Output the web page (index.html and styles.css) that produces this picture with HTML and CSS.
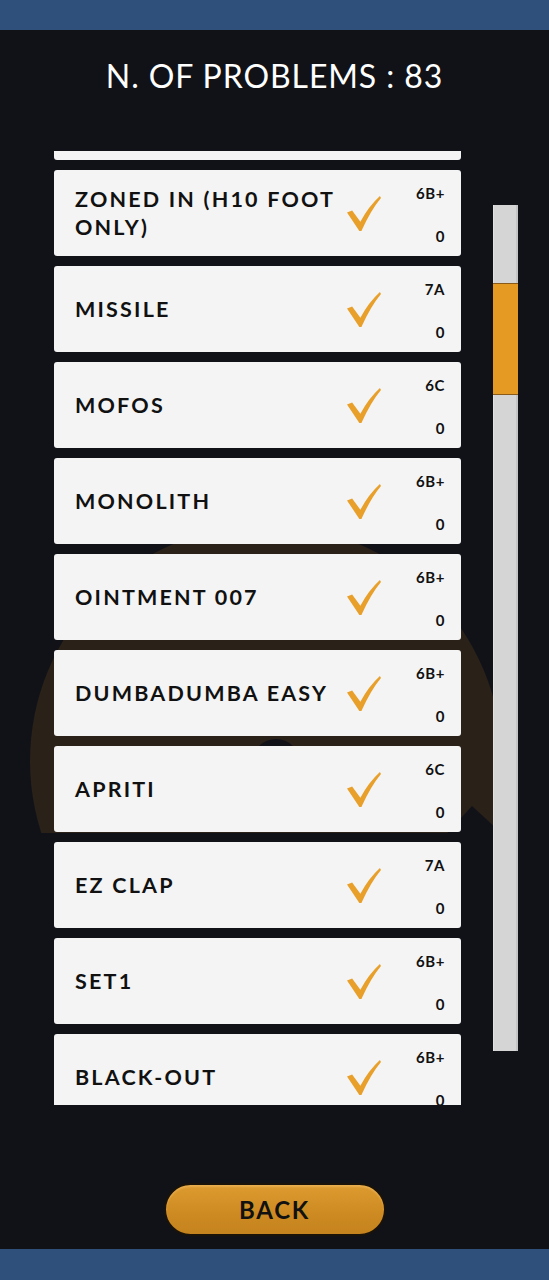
FILE: index.html
```html
<!DOCTYPE html>
<html>
<head>
<meta charset="utf-8">
<link rel="stylesheet" href="styles.css">
</head>
<body>
<div class="screen">
  <div class="topbar"></div>
  <h1 class="title">N. OF PROBLEMS : 83</h1>
  <div class="main">
    <svg class="bg-logo" width="549" height="954" viewBox="0 0 549 954">
      <defs>
        <clipPath id="cut"><rect x="0" y="0" width="549" height="682"/></clipPath>
      </defs>
      <g clip-path="url(#cut)">
        <circle cx="266" cy="610" r="236" fill="#2a2119"/>
        <circle cx="276" cy="612" r="24" fill="#111218"/>
        <polygon points="440,690 472,655 510,690" fill="#111218"/>
      </g>
    </svg>
    <div class="list-view">
      <div class="list">
        <div class="card">
          <div class="name">HOLD ON</div>
          <svg class="check" viewBox="0 0 34 34"><path d="M0 16 L5 14 L13 25 Q21 10 32 0 L33 2 Q23 14 14 34 L12 34 Z"/></svg>
          <div class="meta"><span>6B+</span><span>0</span></div>
        </div>
        <div class="card">
          <div class="name">ZONED IN (H10 FOOT ONLY)</div>
          <svg class="check" viewBox="0 0 34 34"><path d="M0 16 L5 14 L13 25 Q21 10 32 0 L33 2 Q23 14 14 34 L12 34 Z"/></svg>
          <div class="meta"><span>6B+</span><span>0</span></div>
        </div>
        <div class="card">
          <div class="name">MISSILE</div>
          <svg class="check" viewBox="0 0 34 34"><path d="M0 16 L5 14 L13 25 Q21 10 32 0 L33 2 Q23 14 14 34 L12 34 Z"/></svg>
          <div class="meta"><span>7A</span><span>0</span></div>
        </div>
        <div class="card">
          <div class="name">MOFOS</div>
          <svg class="check" viewBox="0 0 34 34"><path d="M0 16 L5 14 L13 25 Q21 10 32 0 L33 2 Q23 14 14 34 L12 34 Z"/></svg>
          <div class="meta"><span>6C</span><span>0</span></div>
        </div>
        <div class="card">
          <div class="name">MONOLITH</div>
          <svg class="check" viewBox="0 0 34 34"><path d="M0 16 L5 14 L13 25 Q21 10 32 0 L33 2 Q23 14 14 34 L12 34 Z"/></svg>
          <div class="meta"><span>6B+</span><span>0</span></div>
        </div>
        <div class="card">
          <div class="name">OINTMENT 007</div>
          <svg class="check" viewBox="0 0 34 34"><path d="M0 16 L5 14 L13 25 Q21 10 32 0 L33 2 Q23 14 14 34 L12 34 Z"/></svg>
          <div class="meta"><span>6B+</span><span>0</span></div>
        </div>
        <div class="card">
          <div class="name">DUMBADUMBA EASY</div>
          <svg class="check" viewBox="0 0 34 34"><path d="M0 16 L5 14 L13 25 Q21 10 32 0 L33 2 Q23 14 14 34 L12 34 Z"/></svg>
          <div class="meta"><span>6B+</span><span>0</span></div>
        </div>
        <div class="card">
          <div class="name">APRITI</div>
          <svg class="check" viewBox="0 0 34 34"><path d="M0 16 L5 14 L13 25 Q21 10 32 0 L33 2 Q23 14 14 34 L12 34 Z"/></svg>
          <div class="meta"><span>6C</span><span>0</span></div>
        </div>
        <div class="card">
          <div class="name">EZ CLAP</div>
          <svg class="check" viewBox="0 0 34 34"><path d="M0 16 L5 14 L13 25 Q21 10 32 0 L33 2 Q23 14 14 34 L12 34 Z"/></svg>
          <div class="meta"><span>7A</span><span>0</span></div>
        </div>
        <div class="card">
          <div class="name">SET1</div>
          <svg class="check" viewBox="0 0 34 34"><path d="M0 16 L5 14 L13 25 Q21 10 32 0 L33 2 Q23 14 14 34 L12 34 Z"/></svg>
          <div class="meta"><span>6B+</span><span>0</span></div>
        </div>
        <div class="card">
          <div class="name">BLACK-OUT</div>
          <svg class="check" viewBox="0 0 34 34"><path d="M0 16 L5 14 L13 25 Q21 10 32 0 L33 2 Q23 14 14 34 L12 34 Z"/></svg>
          <div class="meta"><span>6B+</span><span>0</span></div>
        </div>
      </div>
    </div>
    <div class="scrollbar"><div class="thumb"></div></div>
  </div>
  <div class="actions">
    <button class="back">BACK</button>
  </div>
  <div class="bottombar"></div>
</div>
</body>
</html>
```

FILE: styles.css
```css
* { box-sizing: border-box; }
html, body {
  margin: 0;
  padding: 0;
  background: #111218;
}
.screen {
  width: 549px;
  height: 1280px;
  display: flex;
  flex-direction: column;
  font-family: "Lato", "Noto Sans", sans-serif;
  overflow: hidden;
}
.topbar {
  height: 30px;
  background: #30507c;
  flex: none;
}
.title {
  height: 121px;
  margin: 0;
  padding-top: 26px;
  line-height: 40px;
  font-size: 32px;
  font-weight: 400;
  letter-spacing: 0.9px;
  color: #ffffff;
  text-align: center;
  flex: none;
}
.main {
  position: relative;
  height: 954px;
  display: flex;
  gap: 32px;
  padding-left: 54px;
  flex: none;
}
.bg-logo {
  position: absolute;
  left: 0;
  top: 0;
  z-index: 0;
}
.list-view {
  position: relative;
  z-index: 1;
  width: 407px;
  height: 954px;
  overflow: hidden;
}
.list {
  margin-top: -77px;
  display: flex;
  flex-direction: column;
  gap: 10px;
}
.card {
  height: 86px;
  background: #f4f4f4;
  border-radius: 3px;
  display: flex;
  align-items: center;
  padding: 0 16px 0 21px;
  color: #111111;
}
.name {
  flex: 1;
  font-size: 21.5px;
  font-weight: 700;
  letter-spacing: 2.2px;
  line-height: 28px;
}
.check {
  width: 35px;
  height: 35px;
  margin-right: 23px;
  fill: #e8a02a;
  flex: none;
}
.meta {
  width: 40px;
  height: 100%;
  display: flex;
  flex-direction: column;
  justify-content: space-between;
  align-items: flex-end;
  padding: 14px 0 11px;
  font-size: 15px;
  font-weight: 700;
  letter-spacing: 0.6px;
  line-height: 18px;
  flex: none;
}
.scrollbar {
  position: relative;
  z-index: 1;
  margin-top: 54px;
  width: 25px;
  height: 846px;
  background: #d5d5d5;
  border-left: 1px solid #e2e2e2;
  border-right: 2px solid #c4c4c4;
}
.thumb {
  margin-top: 78px;
  height: 112px;
  margin-left: -1px;
  margin-right: -2px;
  background: #e59a24;
  border-top: 1px solid #8a5a18;
  border-bottom: 1px solid #8a5a18;
}
.actions {
  height: 144px;
  display: flex;
  justify-content: center;
  padding-top: 78px;
  flex: none;
}
.back {
  width: 222px;
  height: 53px;
  border-radius: 27px;
  border: 2px solid #1a1309;
  background: linear-gradient(#dc9b2f, #cd8a22 60%, #c5831f);
  font-family: "Lato", "Noto Sans", sans-serif;
  font-size: 24px;
  font-weight: 700;
  letter-spacing: 1.8px;
  color: #111111;
  padding: 0;
  box-shadow: inset 0 2px 2px rgba(255, 210, 140, 0.35);
}
.bottombar {
  height: 31px;
  background: #30507c;
  flex: none;
}
```
